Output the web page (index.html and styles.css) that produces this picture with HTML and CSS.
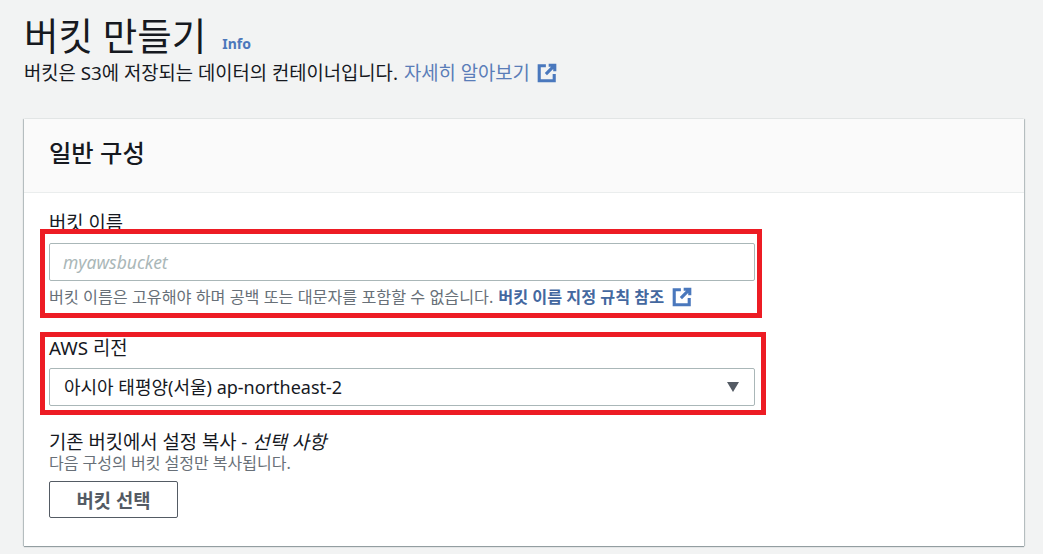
FILE: index.html
```html
<!DOCTYPE html>
<html lang="ko">
<head>
    <meta charset="UTF-8">
    <meta name="viewport" content="width=device-width, initial-scale=1.0">
    <title>버킷 만들기</title>
    <link rel="stylesheet" href="styles.css">
</head>
<body>
    <div class="page-header">
        <div class="title-row">
            <h1>버킷 만들기</h1>
            <a class="info-link">Info</a>
        </div>
        <p class="page-desc">
            버킷은 S3에 저장되는 데이터의 컨테이너입니다.
            <a class="doc-link">자세히 알아보기</a>
            <svg class="ext-icon" viewBox="0 0 18 18"><path d="M8 2.500H2v13.500h13.500V10M10.500 2H16v5.500M16 2L8 10" /></svg>
        </p>
    </div>

    <div class="card">
        <div class="card-header">
            <h2>일반 구성</h2>
        </div>
        <div class="card-body">
            <div class="field field-name">
                <label class="field-label">버킷 이름</label>
                <input class="text-input" type="text" placeholder="myawsbucket">
                <p class="field-hint">
                    버킷 이름은 고유해야 하며 공백 또는 대문자를 포함할 수 없습니다.
                    <a class="rule-link">버킷 이름 지정 규칙 참조</a>
                    <svg class="ext-icon" viewBox="0 0 18 18"><path d="M8 2.500H2v13.500h13.500V10M10.500 2H16v5.500M16 2L8 10" /></svg>
                </p>
                <div class="red-box red-box-name"></div>
            </div>

            <div class="field field-region">
                <label class="field-label">AWS 리전</label>
                <div class="select-box">
                    <span class="select-value">아시아 태평양(서울) ap-northeast-2</span>
                    <span class="caret"></span>
                </div>
                <div class="red-box red-box-region"></div>
            </div>

            <div class="field field-copy">
                <label class="field-label">기존 버킷에서 설정 복사 - <i>선택 사항</i></label>
                <p class="copy-hint">다음 구성의 버킷 설정만 복사됩니다.</p>
                <button class="choose-button">버킷 선택</button>
            </div>
        </div>
    </div>
</body>
</html>
```

FILE: styles.css
```css
body {
    margin: 0;
    padding: 0;
    height: 554px;
    overflow: hidden;
    background-color: #f2f3f3;
    color: #16191f;
    font-family: "Noto Sans", "Noto Sans CJK KR", sans-serif;
    font-size: 18.8px;
}

p {
    margin: 0;
}

.page-header {
    padding: 13px 0 0 24px;
    height: 108px;
    box-sizing: border-box;
}

.title-row {
    display: flex;
    align-items: flex-end;
    height: 45px;
}

h1 {
    margin: 0;
    font-size: 37.500px;
    font-weight: 400;
    line-height: 45px;
}

.info-link {
    margin: 0 0 4px 16px;
    font-size: 14px;
    font-weight: 700;
    line-height: 20px;
    color: #4c78bb;
}

.page-desc {
    display: flex;
    align-items: center;
    gap: 6px;
    line-height: 24px;
    margin-top: 3px;
}

.doc-link {
    color: #5a7db8;
}

.ext-icon {
    width: 20px;
    height: 20px;
    margin-left: 1px;
    flex: none;
    fill: none;
    stroke: #4a78bd;
    stroke-width: 2.800;
}

.card {
    margin: 11px 19px 0 24px;
    background: #fff;
    box-shadow: -1px 0 1px rgba(0, 28, 36, 0.2), 1px 0 1px rgba(0, 28, 36, 0.2), 0 1px 1px rgba(0, 28, 36, 0.35);
}

.card-header {
    height: 74px;
    box-sizing: border-box;
    padding: 18px 25px 0;
    background: #fafafa;
    border-bottom: 1px solid #eaeded;
}

h2 {
    margin: 0;
    font-size: 24.300px;
    font-weight: 500;
    line-height: 32px;
}

.card-body {
    padding: 18px 25px 28px;
    height: 353px;
    box-sizing: border-box;
}

.field {
    position: relative;
    width: 706px;
}

.field-label {
    display: block;
    line-height: 24px;
}

.text-input {
    display: block;
    width: 100%;
    height: 38px;
    box-sizing: border-box;
    margin-top: 8px;
    padding: 0 13px;
    border: 1px solid #aab7b8;
    border-radius: 2px;
    background: #fff;
    font-family: inherit;
    font-size: 17.500px;
}

.text-input::placeholder {
    color: #aab7b8;
    font-style: italic;
    opacity: 1;
}

.field-hint {
    display: flex;
    align-items: center;
    gap: 5px;
    margin-top: 5px;
    font-size: 16.200px;
    line-height: 22px;
    color: #687078;
    white-space: nowrap;
}

.rule-link {
    font-weight: 700;
    color: #44689f;
}

.field-hint .ext-icon {
    margin-left: 3px;
}

.field-region {
    margin-top: 28px;
}

.select-box {
    display: flex;
    align-items: center;
    justify-content: space-between;
    height: 38px;
    box-sizing: border-box;
    margin-top: 8px;
    padding: 0 15px 0 14px;
    border: 1px solid #aab7b8;
    border-radius: 2px;
    font-size: 18px;
}

.select-value {
    padding-bottom: 3px;
}

.caret {
    width: 0;
    height: 0;
    border-left: 6.500px solid transparent;
    border-right: 6.500px solid transparent;
    border-top: 10px solid #545b64;
}

.red-box {
    position: absolute;
    box-sizing: border-box;
    border: 5px solid #ed1c24;
    pointer-events: none;
}

.red-box-name {
    left: -9px;
    top: 18px;
    width: 722px;
    height: 89px;
}

.red-box-region {
    left: -9px;
    top: -4px;
    width: 726px;
    height: 83px;
}

.field-copy {
    margin-top: 24px;
}

.copy-hint {
    font-size: 16px;
    line-height: 18px;
    color: #687078;
}

.choose-button {
    display: block;
    width: 129px;
    height: 37px;
    margin-top: 9px;
    padding: 0;
    border: 1px solid #545b64;
    border-radius: 2px;
    background: #fff;
    color: #545b64;
    font-family: inherit;
    font-size: 18.800px;
    font-weight: 700;
}
```
